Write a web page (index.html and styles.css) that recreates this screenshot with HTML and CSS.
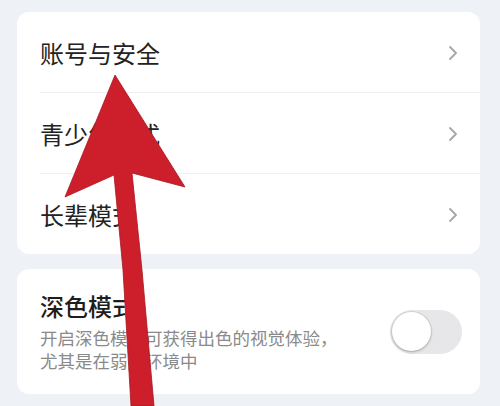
FILE: index.html
```html
<!DOCTYPE html>
<html lang="zh">
<head>
<meta charset="utf-8">
<link rel="stylesheet" href="styles.css">
</head>
<body>
<div class="page">
  <div class="card list">
    <div class="row"><span class="label">账号与安全</span><svg class="chev" viewBox="0 0 10 16"><path d="M2 2 L8 8 L2 14" /></svg></div>
    <div class="row"><span class="label">青少年模式</span><svg class="chev" viewBox="0 0 10 16"><path d="M2 2 L8 8 L2 14" /></svg></div>
    <div class="row"><span class="label">长辈模式</span><svg class="chev" viewBox="0 0 10 16"><path d="M2 2 L8 8 L2 14" /></svg></div>
  </div>
  <div class="card dark">
    <div class="text">
      <div class="title">深色模式</div>
      <div class="desc">开启深色模式可获得出色的视觉体验，<br>尤其是在弱光环境中</div>
    </div>
    <div class="toggle"><div class="knob"></div></div>
  </div>
  <div class="card stub"></div>
</div>
<svg class="arrow" viewBox="0 0 500 406" width="500" height="406">
  <polygon points="115,75 185,187 132,173 142,270 154,406 131,406 123,270 114,175 65,197" />
</svg>
</body>
</html>
```
FILE: styles.css
```css
html, body {
  margin: 0;
  padding: 0;
  background: #eef1f6;
  font-family: "Noto Sans CJK SC", "Noto Sans", sans-serif;
  overflow: hidden;
}
.page {
  width: 500px;
  height: 406px;
  box-sizing: border-box;
  padding: 12px 20px 0 17px;
  display: flex;
  flex-direction: column;
  gap: 15px;
  overflow: hidden;
}
.card {
  background: #fff;
  border-radius: 12px;
  flex-shrink: 0;
}
.list {
  display: flex;
  flex-direction: column;
}
.row {
  height: 78px;
  display: flex;
  align-items: center;
  justify-content: space-between;
  margin-left: 23px;
  padding-right: 22px;
  padding-top: 2px;
  border-bottom: 1px solid #f0f1f3;
}
.row:last-child {
  border-bottom: none;
}
.label {
  font-size: 24px;
  color: #222;
  line-height: 30px;
}
.chev {
  width: 10px;
  height: 16px;
}
.chev path {
  fill: none;
  stroke: #a6a6a6;
  stroke-width: 1.8;
  stroke-linecap: round;
  stroke-linejoin: round;
}
.dark {
  height: 125px;
  box-sizing: border-box;
  display: flex;
  align-items: center;
  justify-content: space-between;
  padding: 0 18px 0 23px;
}
.text {
  display: flex;
  flex-direction: column;
  gap: 5px;
}
.title {
  font-size: 24px;
  font-weight: 500;
  line-height: 30px;
  color: #1e1e1e;
}
.desc {
  font-size: 17.5px;
  line-height: 23px;
  color: #8a8a8a;
}
.toggle {
  width: 72px;
  height: 44px;
  border-radius: 22px;
  background: #e7e7e9;
  display: flex;
  align-items: center;
  padding: 0 2px;
  box-sizing: border-box;
}
.knob {
  width: 39px;
  height: 39px;
  border-radius: 50%;
  background: #fff;
  box-shadow: 0 1px 3px rgba(0,0,0,0.25), 0 0 0 1px rgba(0,0,0,0.06);
}
.stub {
  height: 40px;
}
.arrow {
  position: absolute;
  left: 0;
  top: 0;
}
.arrow polygon {
  fill: #cc1f2b;
  stroke: #a8161f;
  stroke-width: 0.8;
  stroke-linejoin: round;
}
```
